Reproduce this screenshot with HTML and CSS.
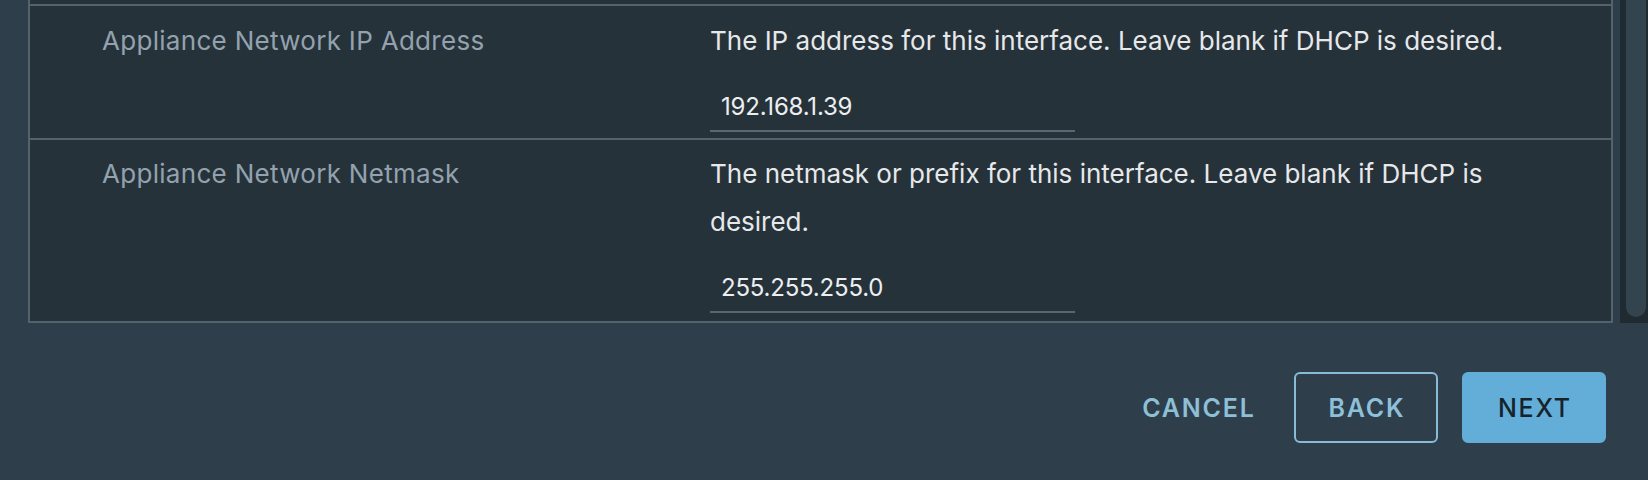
FILE: index.html
```html
<!DOCTYPE html>
<html>
<head>
<meta charset="utf-8">
<title>Customize template</title>
<link rel="stylesheet" href="styles.css">
</head>
<body>
<div class="page">
  <div class="scroll-area">
    <div class="prop-table">
      <div class="row-stub"></div>
      <div class="prop-row">
        <div class="prop-label">Appliance Network IP Address</div>
        <div class="prop-field">
          <p class="prop-desc">The IP address for this interface. Leave blank if DHCP is desired.</p>
          <input class="text-input" type="text" value="192.168.1.39">
        </div>
      </div>
      <div class="prop-row">
        <div class="prop-label">Appliance Network Netmask</div>
        <div class="prop-field">
          <p class="prop-desc">The netmask or prefix for this interface. Leave blank if DHCP is desired.</p>
          <input class="text-input" type="text" value="255.255.255.0">
        </div>
      </div>
    </div>
    <div class="scrollbar"><div class="scrollbar-thumb"></div></div>
  </div>
  <div class="footer">
    <button class="btn btn-flat" type="button">CANCEL</button>
    <button class="btn btn-outline" type="button">BACK</button>
    <button class="btn btn-primary" type="button">NEXT</button>
  </div>
</div>
</body>
</html>
```
FILE: styles.css
```css
html, body {
  margin: 0;
  padding: 0;
}
body {
  background: #2f3e4b;
  font-family: Inter, "Noto Sans", sans-serif;
  overflow: hidden;
}
.page {
  height: 480px;
  display: flex;
  flex-direction: column;
}
.scroll-area {
  display: flex;
  height: 323px;
  padding-left: 28px;
  gap: 7px;
}
.prop-table {
  flex: 1;
  box-sizing: border-box;
  background: #26323a;
  border-left: 2px solid #53626d;
  border-right: 2px solid #53626d;
  border-bottom: 2px solid #53626d;
  display: flex;
  flex-direction: column;
}
.row-stub {
  height: 4px;
  flex: none;
}
.prop-row {
  display: grid;
  grid-template-columns: 680px 1fr;
  border-top: 2px solid #53626d;
  padding: 10.5px 0 6px 0;
}
.prop-row:last-child {
  flex: 1;
}
.prop-label {
  padding-left: 72px;
  font-size: 26px;
  line-height: 48px;
  letter-spacing: 0.3px;
  color: #93a2ae;
}
.prop-field {
  display: flex;
  flex-direction: column;
  align-items: flex-start;
}
.prop-desc {
  margin: 0;
  max-width: 830px;
  font-size: 26px;
  line-height: 48px;
  color: #e6e8ea;
}
.text-input {
  box-sizing: border-box;
  margin: 18px 0 0 0;
  width: 365px;
  height: 49px;
  padding: 0 11px;
  border: none;
  border-bottom: 2px solid #5c6670;
  background: transparent;
  color: #eceef0;
  font-family: Inter, "Noto Sans", sans-serif;
  font-size: 24px;
  letter-spacing: -0.2px;
  outline: none;
}
.scrollbar {
  width: 28px;
  flex: none;
  background: #1f2a31;
}
.scrollbar-thumb {
  margin-left: 6px;
  width: 20px;
  height: 317px;
  background: #34444f;
  border-radius: 0 0 10px 10px;
}
.footer {
  display: flex;
  justify-content: flex-end;
  gap: 24px;
  padding: 49px 42px 0 0;
}
.btn {
  box-sizing: border-box;
  min-width: 144px;
  height: 71px;
  padding: 0 12px;
  border: 2px solid transparent;
  border-radius: 6px;
  background: transparent;
  font-family: Inter, "Noto Sans", sans-serif;
  font-size: 25px;
  font-weight: 600;
  letter-spacing: 1.8px;
  text-indent: 1.8px;
  display: flex;
  align-items: center;
  justify-content: center;
  cursor: pointer;
}
.btn-flat {
  color: #8dbfd7;
}
.btn-outline {
  border-color: #86bcd8;
  color: #8dc0da;
}
.btn-primary {
  background: #62aed9;
  border-color: #62aed9;
  color: #17232b;
  font-weight: 500;
}
```
